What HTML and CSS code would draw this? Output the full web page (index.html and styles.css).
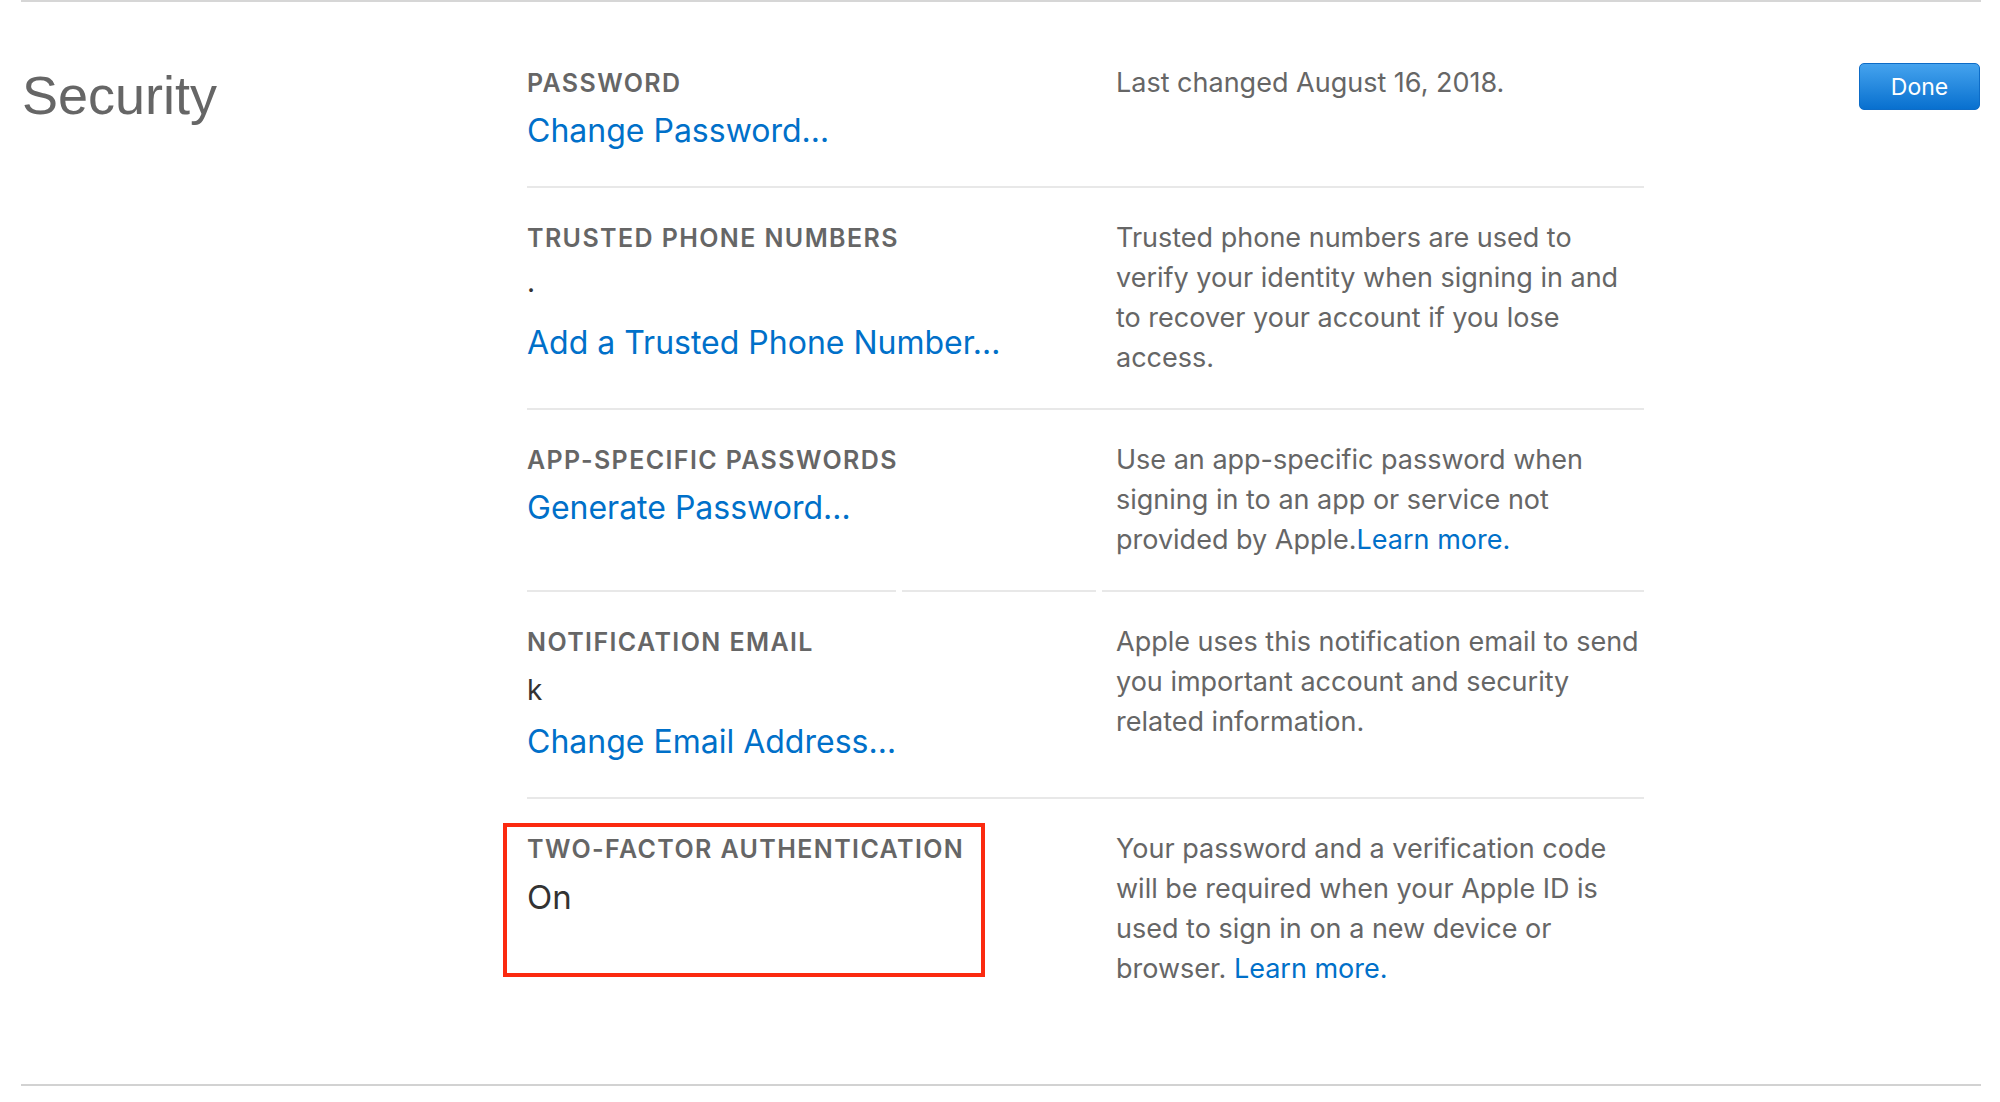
FILE: index.html
```html
<!DOCTYPE html>
<html lang="en">
<head>
<meta charset="utf-8">
<title>Security</title>
<link rel="stylesheet" href="styles.css">
</head>
<body>
<section class="security">
  <h2 class="title">Security</h2>
  <div class="rows">
    <div class="row">
      <div class="main">
        <div class="label">PASSWORD</div>
        <a class="action" href="#">Change Password…</a>
      </div>
      <p class="desc">Last changed August 16, 2018.</p>
    </div>
    <div class="sep"></div>
    <div class="row">
      <div class="main">
        <div class="label">TRUSTED PHONE NUMBERS</div>
        <div class="value value-phone">.</div>
        <a class="action" href="#">Add a Trusted Phone Number…</a>
      </div>
      <p class="desc">Trusted phone numbers are used to verify your identity when signing in and to recover your account if you lose access.</p>
    </div>
    <div class="sep"></div>
    <div class="row">
      <div class="main">
        <div class="label">APP-SPECIFIC PASSWORDS</div>
        <a class="action" href="#">Generate Password…</a>
      </div>
      <p class="desc">Use an app-specific password when signing in to an app or service not provided by Apple.<a class="inline-link" href="#">Learn more.</a></p>
    </div>
    <div class="sep sep-split"><span class="seg-a"></span><span class="seg-b"></span><span class="seg-c"></span></div>
    <div class="row">
      <div class="main">
        <div class="label">NOTIFICATION EMAIL</div>
        <div class="value">k</div>
        <a class="action" href="#">Change Email Address…</a>
      </div>
      <p class="desc">Apple uses this notification email to send you important account and security related information.</p>
    </div>
    <div class="sep"></div>
    <div class="row">
      <div class="main">
        <div class="label">TWO-FACTOR AUTHENTICATION</div>
        <div class="status">On</div>
        <div class="highlight"></div>
      </div>
      <p class="desc">Your password and a verification code will be required when your Apple ID is used to sign in on a new device or browser. <a class="inline-link" href="#">Learn more.</a></p>
    </div>
  </div>
  <div class="side">
    <button class="done" type="button">Done</button>
  </div>
</section>
</body>
</html>
```
FILE: styles.css
```css
html, body {
  margin: 0;
  padding: 0;
  background: #ffffff;
}

body {
  font-family: Inter, "Liberation Sans", sans-serif;
  color: #666666;
}

.security {
  display: flex;
  align-items: flex-start;
  margin-left: 21px;
  width: 1960px;
  border-top: 2px solid #d6d6d6;
  border-bottom: 2px solid #d2d2d2;
}

.title {
  box-sizing: border-box;
  width: 506px;
  flex: none;
  margin: 61px 0 0;
  padding-left: 1px;
  font-family: "Liberation Sans", Arial, sans-serif;
  font-size: 54px;
  line-height: 64px;
  font-weight: 400;
  color: #666666;
}

.rows {
  width: 1117px;
  flex: none;
  padding: 31px 0 65px;
}

.row {
  display: grid;
  grid-template-columns: 589px 528px;
  padding-top: 30px;
}

.main {
  position: relative;
  padding-bottom: 35px;
}

.label {
  font-size: 25px;
  font-weight: 600;
  line-height: 40px;
  letter-spacing: 1.4px;
  color: #666666;
}

.value {
  margin-top: 8px;
  font-size: 28px;
  line-height: 40px;
  color: #333333;
}

.value-phone {
  margin-top: 4px;
  margin-bottom: 21px;
}

.status {
  margin-top: 8px;
  font-size: 33px;
  line-height: 40px;
  color: #333333;
}

.action {
  display: block;
  margin-top: 8px;
  font-size: 32px;
  line-height: 40px;
  color: #0070c9;
  text-decoration: none;
}

.value + .action {
  margin-top: 12px;
}

.desc {
  margin: 0;
  padding-bottom: 30px;
  font-size: 27px;
  line-height: 40px;
  color: #666666;
}

.inline-link {
  color: #0070c9;
  text-decoration: none;
}

.sep {
  height: 2px;
  background: #e8e8e8;
}

.sep-split {
  display: flex;
  gap: 6px;
  background: transparent;
}

.sep-split span {
  height: 2px;
  background: #e8e8e8;
}

.seg-a { width: 369px; }
.seg-b { width: 194px; }
.seg-c { flex: 1; }

.highlight {
  position: absolute;
  left: -24px;
  top: -6px;
  box-sizing: border-box;
  width: 482px;
  height: 154px;
  border: 4px solid #fb2a10;
}

.side {
  flex: 1;
  display: flex;
  justify-content: flex-end;
  padding-top: 61px;
  padding-right: 1px;
}

.done {
  box-sizing: border-box;
  width: 121px;
  height: 47px;
  border: 1px solid #0d6cc7;
  border-radius: 5px;
  background: linear-gradient(#45a3ee, #0870cf);
  color: #ffffff;
  font-family: Inter, "Liberation Sans", sans-serif;
  font-size: 23px;
  font-weight: 400;
  padding: 0;
}
```
